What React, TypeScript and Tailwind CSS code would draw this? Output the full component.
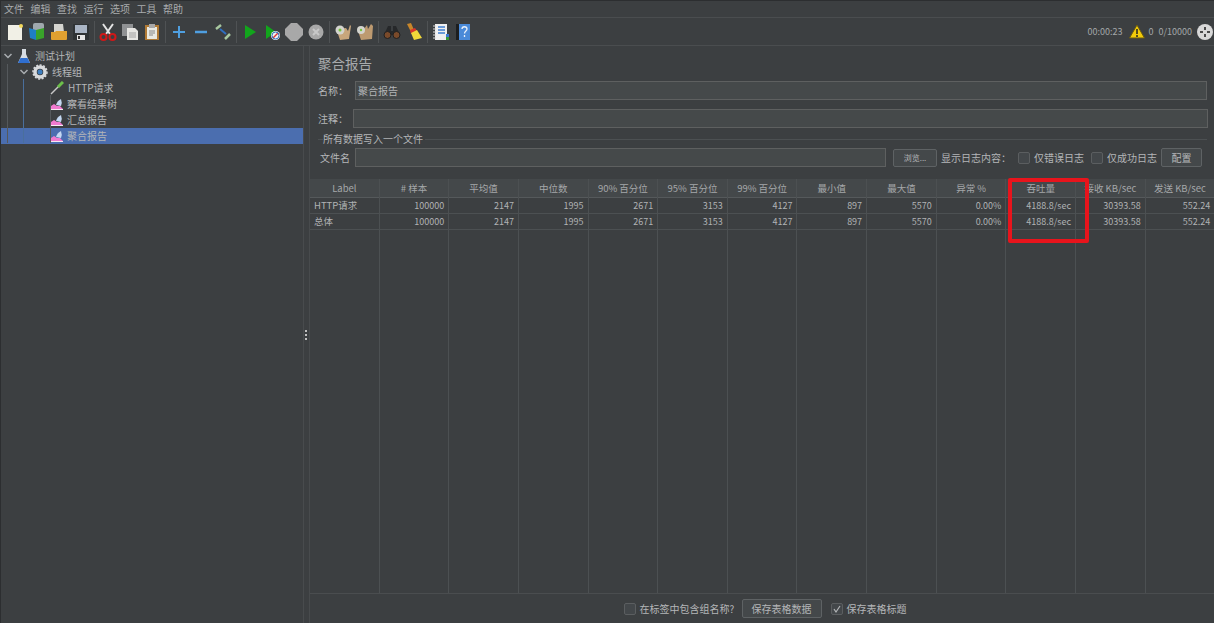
import React from 'react';

const FONT = '"Noto Sans CJK SC", "Noto Sans", sans-serif';

const menus = ['文件', '编辑', '查找', '运行', '选项', '工具', '帮助'];

const columns = [
  { title: 'Label', left: true, a: 'HTTP请求', b: '总体' },
  { title: '# 样本', a: '100000', b: '100000' },
  { title: '平均值', a: '2147', b: '2147' },
  { title: '中位数', a: '1995', b: '1995' },
  { title: '90% 百分位', a: '2671', b: '2671' },
  { title: '95% 百分位', a: '3153', b: '3153' },
  { title: '99% 百分位', a: '4127', b: '4127' },
  { title: '最小值', a: '897', b: '897' },
  { title: '最大值', a: '5570', b: '5570' },
  { title: '异常 %', a: '0.00%', b: '0.00%' },
  { title: '吞吐量', a: '4188.8/sec', b: '4188.8/sec' },
  { title: '接收 KB/sec', a: '30393.58', b: '30393.58' },
  { title: '发送 KB/sec', a: '552.24', b: '552.24' },
];

// toolbar icons are all drawn on a 18x18 box
const Tool = ({ children }: { children: React.ReactNode }) => (
  <div className="flex h-full w-[22px] shrink-0 items-center justify-center">
    <svg width="18" height="18" viewBox="0 0 18 18">
      {children}
    </svg>
  </div>
);

const Sep = () => (
  <div className="flex h-full w-[5px] shrink-0 items-center justify-center">
    <div className="h-[22px] w-px bg-[#4f5254]" />
  </div>
);

const Toolbar = () => (
  <div className="flex h-full items-center pl-[3px]">
    {/* new */}
    <Tool>
      <rect x="2" y="2" width="14" height="15" fill="#f1f0e6" />
      <circle cx="15" cy="3" r="2" fill="#f2d95c" />
    </Tool>
    {/* templates */}
    <Tool>
      <rect x="5" y="0" width="11" height="8" rx="2" fill="#9fa8ad" />
      <path d="M1 5 L8 7 V17 L2 15 Z" fill="#1f7fc4" />
      <path d="M8 7 L16 5 V15 L8 17 Z" fill="#39a32a" />
    </Tool>
    {/* open */}
    <Tool>
      <path d="M4 1 H13 L14 9 H4 Z" fill="#d5d5d0" />
      <path d="M1 9 H5 L6 8 H17 V16 Q17 17 16 17 H2 Q1 17 1 16 Z" fill="#e0a030" />
    </Tool>
    {/* save */}
    <Tool>
      <path d="M1 1 H17 V17 H1 Z" fill="#2f3335" />
      <rect x="3" y="2" width="12" height="8" fill="#a9b4c4" />
      <rect x="5" y="12" width="8" height="5" fill="#e6e6e6" />
      <rect x="6" y="13" width="2" height="3" fill="#333" />
    </Tool>
    <Sep />
    {/* cut */}
    <Tool>
      <path d="M4 1 L11 11 M14 1 L7 11" stroke="#e4e4e4" strokeWidth="2" />
      <circle cx="4.5" cy="14" r="3" fill="none" stroke="#d01818" strokeWidth="2" />
      <circle cx="13.5" cy="14" r="3" fill="none" stroke="#d01818" strokeWidth="2" />
    </Tool>
    {/* copy */}
    <Tool>
      <rect x="1" y="1" width="11" height="12" fill="#8f9193" />
      <path d="M6 5 H14 L17 8 V17 H6 Z" fill="#e6e6e3" />
      <path d="M8 10 H15 M8 12 H15 M8 14 H15" stroke="#a0a0a0" strokeWidth="1" />
    </Tool>
    {/* paste */}
    <Tool>
      <rect x="2" y="2" width="14" height="15" fill="#b07a35" />
      <rect x="4" y="4" width="10" height="12" fill="#e9e9e2" />
      <rect x="6" y="1" width="6" height="4" fill="#a8a8a8" />
      <path d="M6 8 H12 M6 10 H12 M6 12 H10" stroke="#888" strokeWidth="1" />
    </Tool>
    <Sep />
    {/* add */}
    <Tool>
      <path d="M9 3 V15 M3 9 H15" stroke="#4f9fe0" strokeWidth="2" />
    </Tool>
    {/* remove */}
    <Tool>
      <path d="M3 9 H15" stroke="#4f9fe0" strokeWidth="2.5" />
    </Tool>
    {/* toggle */}
    <Tool>
      <path d="M2 6 L7 2" stroke="#a8c8a0" strokeWidth="2.5" />
      <path d="M6 6 L12 11" stroke="#2f6fc0" strokeWidth="2" />
      <path d="M11 16 L16 11" stroke="#a8c8a0" strokeWidth="2.5" />
    </Tool>
    <Sep />
    {/* start */}
    <Tool>
      <path d="M4 2 L15 9 L4 16 Z" fill="#12a51c" />
    </Tool>
    {/* start no pauses */}
    <Tool>
      <path d="M3 2 L13 9 L3 16 Z" fill="#12a51c" />
      <circle cx="12.5" cy="12.5" r="4.5" fill="#f2f2f2" />
      <path d="M10 15 L15 10" stroke="#d33" strokeWidth="1.5" />
      <circle cx="12.5" cy="12.5" r="3.5" fill="none" stroke="#2f6fc0" strokeWidth="1" />
    </Tool>
    {/* stop */}
    <Tool>
      <path d="M6 0 H12 L18 6 V12 L12 18 H6 L0 12 V6 Z" fill="#a8a8a8" />
    </Tool>
    {/* shutdown */}
    <Tool>
      <circle cx="9" cy="9" r="7.5" fill="#a8a8a8" />
      <path d="M6 6 L12 12 M12 6 L6 12" stroke="#c8c8c8" strokeWidth="2" />
    </Tool>
    <Sep />
    {/* clear */}
    <Tool>
      <path d="M5 6 L12 5 L14 8 L16 2 L17 3 L15 16 L6 17 L4 11 Z" fill="#c8a67c" />
      <circle cx="6" cy="7" r="4.5" fill="#d4d4ce" />
      <circle cx="6" cy="7" r="1.5" fill="#77c23c" />
    </Tool>
    {/* clear all */}
    <Tool>
      <path d="M4 6 L8 6 L11 2 L12 6 L15 1 L17 3 L16 16 L5 17 L3 11 Z" fill="#bd9a70" />
      <circle cx="5" cy="7" r="4" fill="#d4d4ce" />
      <circle cx="5" cy="7" r="1.2" fill="#77c23c" />
    </Tool>
    <Sep />
    {/* search */}
    <Tool>
      <path d="M5 3 H8 V8 H10 V3 H13 L17 12 H1 Z" fill="#26282a" />
      <circle cx="4.5" cy="12" r="3.5" fill="#7a4a2a" stroke="#202020" />
      <circle cx="13.5" cy="12" r="3.5" fill="#7a4a2a" stroke="#202020" />
    </Tool>
    {/* reset search */}
    <Tool>
      <path d="M2 1 L6 0 L9 7 L6 9 Z" fill="#c8862a" />
      <path d="M5 7 L10 5 L12 8 L6 11 Z" fill="#d8362a" />
      <path d="M6 10 L12 7 L17 15 L9 17 Z" fill="#f2d83a" />
    </Tool>
    <Sep />
    {/* function helper */}
    <Tool>
      <rect x="3" y="1" width="12" height="16" fill="#f0f0f0" />
      <path d="M1 3 H4 M1 6 H4 M1 9 H4 M1 12 H4 M1 15 H4" stroke="#d8d8d8" strokeWidth="1" />
      <path d="M6 4 H13 M6 7 H13 M6 10 H13" stroke="#3f7fd0" strokeWidth="1.5" />
      <rect x="14" y="11" width="3" height="3" fill="#3c78d0" />
      <rect x="14" y="14" width="3" height="3" fill="#3a9a38" />
    </Tool>
    {/* help */}
    <Tool>
      <rect x="2" y="1" width="3" height="16" fill="#1c1e20" />
      <rect x="5" y="1" width="11" height="16" fill="#4a8ad8" />
      <path d="M8 6 C8 3 13 3 13 6 C13 8 10.5 8 10.5 10.5 M10.5 12 V14" fill="none" stroke="#e8f0fa" strokeWidth="1.3" />
    </Tool>
  </div>
);

const Chevron = () => (
  <svg width="10" height="10" viewBox="0 0 10 10" className="shrink-0">
    <path d="M1.5 3 L5 6.5 L8.5 3" fill="none" stroke="#a9adb0" strokeWidth="1.5" />
  </svg>
);

const ListenerIcon = () => (
  <svg width="12" height="12" viewBox="0 0 12 12" className="shrink-0">
    <path d="M0 11 V8 L3 6 L6 8 L9 8 L12 11 Z" fill="#f07ad0" />
    <path d="M0 11.5 H12" stroke="#f6e8f2" />
    <path d="M5 7 Q6 3 10 1 Q11.5 5 10 8 Z" fill="#c4d8f2" />
  </svg>
);

const TreeRow = ({ indent, icon, label, selected, chevron }: {
  indent: string;
  icon: React.ReactNode;
  label: string;
  selected?: boolean;
  chevron?: boolean;
}) => (
  <div className={`flex h-4 items-center text-[10px] leading-none text-[#b4b6b8] ${indent} ${selected ? 'bg-[#4b6eaf]' : ''}`}>
    {chevron && <Chevron />}
    {icon}
    <span className="ml-[4px] whitespace-nowrap">{label}</span>
  </div>
);

const Tree = () => (
  <div className="relative w-[302px] shrink-0 pt-[2px]">
    <TreeRow
      indent="pl-[2px]"
      chevron
      label="测试计划"
      icon={
        <svg width="14" height="16" viewBox="0 0 14 16" className="ml-[4px] shrink-0">
          <path d="M5 1 H9 V6 L13 15 H1 L5 6 Z" fill="#d6dce2" />
          <path d="M3.5 10 H10.5 L13 15 H1 Z" fill="#2f6fd0" />
        </svg>
      }
    />
    <TreeRow
      indent="pl-[18px]"
      chevron
      label="线程组"
      icon={
        <svg width="16" height="16" viewBox="0 0 16 16" className="ml-[3px] shrink-0">
          <circle cx="8" cy="8" r="5" fill="none" stroke="#d8dadc" strokeWidth="3.5" />
          <circle cx="8" cy="8" r="7" fill="none" stroke="#d8dadc" strokeWidth="1.5" strokeDasharray="2 1.6" />
          <circle cx="8" cy="8" r="2.5" fill="#3f7fc0" />
        </svg>
      }
    />
    <TreeRow
      indent="pl-[49px]"
      label="HTTP请求"
      icon={
        <svg width="14" height="14" viewBox="0 0 14 14" className="shrink-0">
          <path d="M1 13 L9 5" stroke="#c8c8c8" strokeWidth="1.5" />
          <path d="M8 6 L13 1" stroke="#6cc04a" strokeWidth="3" />
        </svg>
      }
    />
    <TreeRow indent="pl-[50px]" label="察看结果树" icon={<ListenerIcon />} />
    <TreeRow indent="pl-[50px]" label="汇总报告" icon={<ListenerIcon />} />
    <TreeRow indent="pl-[50px]" label="聚合报告" selected icon={<ListenerIcon />} />
    {/* guide lines */}
    <div className="absolute left-[6px] top-[18px] h-[79px] w-px bg-[#55595c]" />
    <div className="absolute left-[22px] top-[33px] h-[64px] w-px bg-[#4a6f9c]" />
    <div className="absolute left-[49px] top-[49px] h-[48px] w-px bg-[#55595c]" />
  </div>
);

const Field = ({ className }: { className: string }) => (
  <div className={`h-[19px] border border-[#5e6060] bg-[#45494a] ${className}`} />
);

const Check = ({ checked }: { checked?: boolean }) => (
  <div className="flex h-[12px] w-[12px] shrink-0 items-center justify-center rounded-[2px] border border-[#5b5e60] bg-[#43474a]">
    {checked && (
      <svg width="10" height="10" viewBox="0 0 10 10">
        <path d="M2 5 L4 8 L8 2" fill="none" stroke="#b4b6b8" strokeWidth="1.2" />
      </svg>
    )}
  </div>
);

const Btn = ({ className, children }: { className: string; children: React.ReactNode }) => (
  <div className={`flex items-center justify-center rounded-[2px] border border-[#5e6264] bg-[#44484a] text-[#b4b6b8] ${className}`}>
    {children}
  </div>
);

const Table = () => (
  <div className="flex min-h-0 flex-1">
    {columns.map((col) => (
      <div key={col.title} className="w-[69.65px] shrink-0 border-r border-[#4c5052]">
        <div className="flex h-[19px] items-center justify-center whitespace-nowrap border-b border-[#55595b] bg-[#44484a] text-[9.5px] text-[#a4a7a9]">
          {col.title}
        </div>
        {[col.a, col.b].map((v, i) => (
          <div
            key={i}
            className={`flex h-4 items-center whitespace-nowrap border-b border-[#4c5052] text-[#b0b2b4] ${col.left ? 'justify-start pl-[4px] text-[9.5px]' : 'justify-end pr-[4px] text-[9px]'}`}
          >
            {v}
          </div>
        ))}
      </div>
    ))}
  </div>
);

export default function App() {
  return (
    <div
      className="relative flex h-[623px] w-[1214px] flex-col overflow-hidden border-t border-l border-[#2c2e30] bg-[#3c3f41] text-[#b4b6b8]"
      style={{ fontFamily: FONT }}
    >
      {/* Menu bar */}
      <div className="flex h-[17px] shrink-0 items-center gap-[7px] border-b border-[#4a4d4f] pl-[3px] text-[10px] leading-none text-[#a8abad]">
        {menus.map((m) => (
          <span key={m} className="w-[19.5px] whitespace-nowrap">{m}</span>
        ))}
      </div>

      {/* Toolbar */}
      <div className="flex h-[28px] shrink-0 items-center justify-between border-b border-[#4a4d4f] pr-[1px]">
        <Toolbar />
        <div className="flex items-center text-[9px] text-[#a4a7a9]">
          <span>00:00:23</span>
          <svg width="16" height="15" viewBox="0 0 16 15" className="ml-[6px]">
            <path d="M8 1 L15.5 14 H0.5 Z" fill="#f2cb0a" stroke="#6a5a10" />
            <path d="M8 5 V10 M8 11 V13" stroke="#222" strokeWidth="1.5" />
          </svg>
          <span className="ml-[4px]">0</span>
          <span className="ml-[5px]">0/10000</span>
          <svg width="16" height="16" viewBox="0 0 16 16" className="ml-[5px]">
            <circle cx="8" cy="8" r="8" fill="#d8d8d8" />
            <path d="M8 3 V13 M3 8 H13" stroke="#4a4a4a" strokeWidth="2" strokeDasharray="3 4" />
          </svg>
        </div>
      </div>

      {/* Main split */}
      <div className="flex min-h-0 flex-1">
        <Tree />

        {/* Splitter */}
        <div className="flex w-[7px] shrink-0 flex-col items-start justify-center gap-[2px] border-l border-r border-[#484b4d] pl-px">
          <div className="h-[2px] w-[2px] bg-[#c0c0c0]" />
          <div className="h-[2px] w-[2px] bg-[#c0c0c0]" />
          <div className="h-[2px] w-[2px] bg-[#c0c0c0]" />
        </div>

        {/* Report panel */}
        <div className="flex min-w-0 flex-1 flex-col">
          <div className="pl-2 pr-[7px]">
            <div className="pt-[7px] text-[13.5px] leading-[20px] text-[#a8abad]">聚合报告</div>
            <div className="mt-[8px] flex items-center text-[10px]">
              <span className="w-[37px]">名称：</span>
              <div className="flex h-[19px] flex-1 items-center border border-[#5e6060] bg-[#45494a] pl-[2px] text-[#b4b6b8]">聚合报告</div>
            </div>
            <div className="mt-[9px] flex items-center text-[10px]">
              <span className="w-[35px]">注释：</span>
              <Field className="mr-[-1px] flex-1" />
            </div>
            <div className="relative mt-[4px] h-[14px] pl-[5px] text-[10px] leading-[14px]">
              <span className="relative z-10 bg-[#3c3f41] pr-[2px]">所有数据写入一个文件</span>
              <div className="absolute left-0 right-0 top-[7px] h-px bg-[#4c5052]" />
            </div>
            <div className="mt-[2px] flex items-center text-[10px]">
              <span className="w-[37px] pl-[2px]">文件名</span>
              <Field className="w-[531px]" />
              <Btn className="ml-[7px] h-[18px] w-[44px] text-[8px]">浏览...</Btn>
              <span className="ml-[4px] w-[77px] whitespace-nowrap">显示日志内容：</span>
              <Check />
              <span className="ml-[4px] w-[57px] whitespace-nowrap">仅错误日志</span>
              <Check />
              <span className="ml-[4px] w-[54px] whitespace-nowrap">仅成功日志</span>
              <Btn className="h-[19px] w-[41px]">配置</Btn>
            </div>
          </div>

          <div className="mt-[12px] flex min-h-0 flex-1 overflow-hidden">
            <Table />
          </div>

          {/* Bottom options */}
          <div className="flex h-[30px] shrink-0 items-center justify-center gap-[4px] border-t border-[#4a4d4f] pl-[6px] text-[10px]">
            <Check />
            <span className="w-[98px] whitespace-nowrap">在标签中包含组名称?</span>
            <Btn className="h-[19px] w-[80px]">保存表格数据</Btn>
            <div className="ml-[5px]"><Check checked /></div>
            <span className="whitespace-nowrap">保存表格标题</span>
          </div>
        </div>
      </div>

      {/* Red annotation drawn over the screenshot */}
      <div className="absolute left-[1007px] top-[177px] h-[65px] w-[81px] rounded-[2px] border-4 border-[#e8141c]" />
    </div>
  );
}
